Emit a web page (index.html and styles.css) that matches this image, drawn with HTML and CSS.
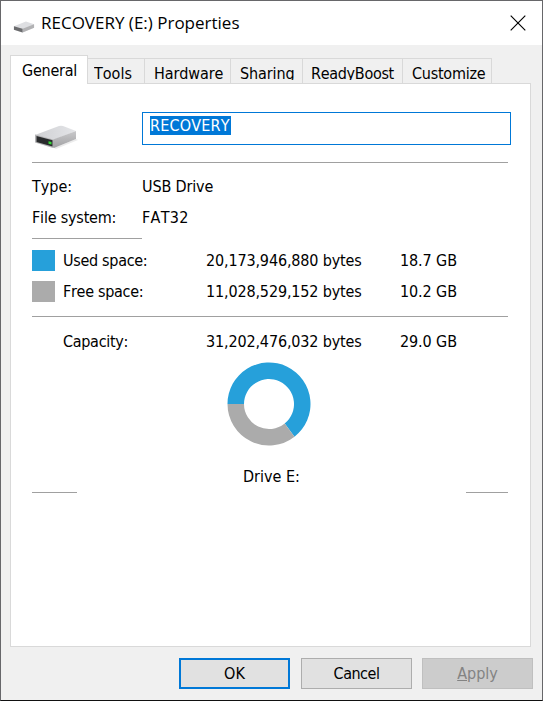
FILE: index.html
```
<!DOCTYPE html>
<html lang="en">
<head>
<meta charset="utf-8">
<title>RECOVERY (E:) Properties</title>
<link rel="stylesheet" href="styles.css">
</head>
<body>
<main class="window">
  <header class="titlebar">
    <svg class="small-drive" width="22" height="12" viewBox="0 0 44 25">
      <path fill="#dedfe2" d="M1 11 26 1 43 7v7L19 24 1 18z"/>
      <path fill="#b2b2b4" d="M19 16 43 7v7L19 24z"/>
      <path fill="#6b6c6e" d="M1 11l18 5v8L1 18z"/>
    </svg>
    <h1>RECOVERY (E:) Properties</h1>
    <svg class="close" width="16" height="16" viewBox="0 0 16 16"><path d="M.7.7l14.6 14.6M15.3.7L.7 15.3" stroke="#000" stroke-width="1.15"/></svg>
  </header>
  <nav class="tabs">
    <div class="tab active"><span>General</span></div>
    <div class="tab tools"><span>Tools</span></div>
    <div class="tab hardware"><span>Hardware</span></div>
    <div class="tab sharing"><span>Sharing</span></div>
    <div class="tab boost"><span>ReadyBoost</span></div>
    <div class="tab customize"><span>Customize</span></div>
  </nav>
  <section class="panel">
    <div class="identity">
      <svg class="drive" width="44" height="25" viewBox="0 0 44 25">
        <defs>
          <linearGradient id="top" x1="0" x2="1"><stop stop-color="#cfd0d3"/><stop offset="1" stop-color="#e4e5e8"/></linearGradient>
          <linearGradient id="side" x1="0" x2="0" y1="0" y2="1"><stop stop-color="#c9c9cb"/><stop offset="1" stop-color="#a2a2a4"/></linearGradient>
        </defs>
        <path fill="#ececec" d="M20 23l22-9 2 1-22 9z"/>
        <path fill="url(#top)" d="M1 10 25 1q2-.4 4 0l13 5-23 9z"/>
        <path fill="url(#side)" d="M19 14.5 42 6v8L20 23l-1-.5z"/>
        <path fill="#b4b4b6" d="M1 9.5l18 5V23L1 17.5z"/>
        <path fill="#292b2c" d="M2.5 11l16 4.3v6.2l-16-4.6z"/>
        <path fill="#36d936" d="M14.5 16.2l3 .7v2.5l-3-.7z"/>
      </svg>
      <div class="name-input"><span>RECOVERY</span></div>
    </div>
    <hr class="rule">
    <dl class="facts">
      <dt class="type">Type:</dt><dd class="kind">USB Drive</dd>
      <dt class="fs">File system:</dt><dd class="fat">FAT32</dd>
    </dl>
    <hr class="rule half">
    <div class="space used"><i class="swatch"></i><span class="label">Used space:</span><span class="bytes">20,173,946,880 bytes</span><span class="gb">18.7 GB</span></div>
    <div class="space free"><i class="swatch"></i><span class="label">Free space:</span><span class="bytes">11,028,529,152 bytes</span><span class="gb">10.2 GB</span></div>
    <hr class="rule lower">
    <div class="space capacity"><i></i><span class="label">Capacity:</span><span class="bytes">31,202,476,032 bytes</span><span class="gb">29.0 GB</span></div>
    <svg class="donut" width="84" height="84" viewBox="-42 -42 84 84">
      <path fill="#26a0da" d="M-41.5 0A41.5 41.5 0 1 1 25.5 32.7L15.7 19.5A25 25 0 1 0-25 0z"/>
      <path fill="#ababab" d="M25.5 32.7A41.5 41.5 0 0 1-41.5 0H-25A25 25 0 0 0 15.7 19.5z"/>
    </svg>
    <p class="drive-name">Drive E:</p>
    <div class="ends"><hr class="left"><hr class="right"></div>
  </section>
  <footer class="actions">
    <button class="ok"><span>OK</span></button>
    <button class="cancel"><span>Cancel</span></button>
    <button class="apply" disabled><span><u>A</u>pply</span></button>
  </footer>
</main>
</body>
</html>
```
FILE: styles.css
```
* { box-sizing: border-box; margin: 0; padding: 0; }
body {
  width: 543px; height: 701px; overflow: hidden;
  font: 16px/20px "DejaVu Sans Condensed", "Noto Sans", sans-serif;
  font-kerning: none; color: #000;
}
svg { display: block; flex: none; }
.window {
  width: 543px; height: 701px; display: flex; flex-direction: column;
  background: #f0f0f0; border: 1px solid #67676a; border-bottom-color: #111;
}
.titlebar {
  flex: none; height: 44px; display: flex; align-items: center;
  padding: 0 16px 0 12px; background: #fff;
}
.small-drive { margin-top: 8px; }
h1 {
  flex: 1; padding: 0 0 0 6px; white-space: nowrap;
  font: 17px/24px "Open Sans", sans-serif;
}
.close { margin-bottom: 1px; }
.tabs { flex: none; display: flex; align-items: flex-end; height: 38px; padding-left: 9px; }
.tab {
  height: 25px; padding: 5px 0 0 9px; overflow: hidden; white-space: nowrap;
  border: 1px solid #d9d9d9; border-width: 1px 1px 0 0; background: #f0f0f0;
}
.tab span { display: block; height: 16px; overflow: hidden; }
.tab.active {
  position: relative; width: 78px; height: 29px; margin-bottom: -1px; padding: 5px 0 0 11px;
  border-left-width: 1px; background: #fff; letter-spacing: -.25px;
}
.tools { width: 57px; padding-left: 6px; }
.hardware { width: 86px; }
.sharing { width: 72px; }
.sharing, .hardware { letter-spacing: -.1px; }
.boost { width: 100px; padding-left: 8px; letter-spacing: -.3px; }
.customize { width: 89px; letter-spacing: -.25px; }
.panel {
  flex: none; width: 521px; height: 564px; margin-left: 9px;
  padding: 28px 0 0 21px; border: 1px solid #d9d9d9; background: #fff;
}
.identity { display: flex; height: 33px; }
.drive { margin: 13px 0 0 2px; }
.name-input { width: 369px; height: 33px; margin-left: 64px; padding: 3px 7px; border: 1px solid #0078d7; }
.name-input span {
  display: block; width: 81px; height: 19px; line-height: 20px;
  background: #0078d7; color: #fff; letter-spacing: .2px;
}
hr { border: 0; height: 1px; background: #a0a0a0; }
.rule { width: 476px; margin-top: 17px; }
.facts {
  display: grid; grid-template-columns: 110px 200px; grid-auto-rows: 31px;
  height: 62px; margin-top: 13px; line-height: 22px;
}
.fs { letter-spacing: -.2px; }
.kind { letter-spacing: -.15px; }
.fat { letter-spacing: .3px; }
.half { width: 110px; margin-top: 0; }
.space { display: grid; grid-template-columns: 23px 143px 194px 100px; height: 31px; line-height: 22px; }
.used { margin-top: 11px; }
.swatch { width: 23px; height: 21px; background: #26a0da; }
.free .swatch { background: #ababab; }
.label { padding-left: 8px; letter-spacing: -.3px; }
.bytes { padding-left: 8px; letter-spacing: -.15px; }
.gb { padding-left: 8px; letter-spacing: -.1px; }
.lower { margin-top: 4px; }
.capacity { margin-top: 14px; }
.donut { margin: 0 0 0 195px; }
.drive-name { margin: 21px 0 0 211px; height: 20px; }
.ends { display: flex; justify-content: space-between; width: 476px; margin-top: 5px; }
.left { width: 45px; }
.right { width: 42px; }
.actions { display: flex; gap: 11px; margin: 11px 0 0 178px; }
button {
  width: 111px; height: 31px; padding-top: 1px; font: inherit; font-kerning: none; color: #000;
  border: 1px solid #adadad; background: #e1e1e1; letter-spacing: 0;
}
.ok { border: 2px solid #0078d7; }
.cancel { letter-spacing: -.5px; }
.apply { margin-left: -1px; border-color: #bfbfbf; background: #ccc; color: #838383; }
```
